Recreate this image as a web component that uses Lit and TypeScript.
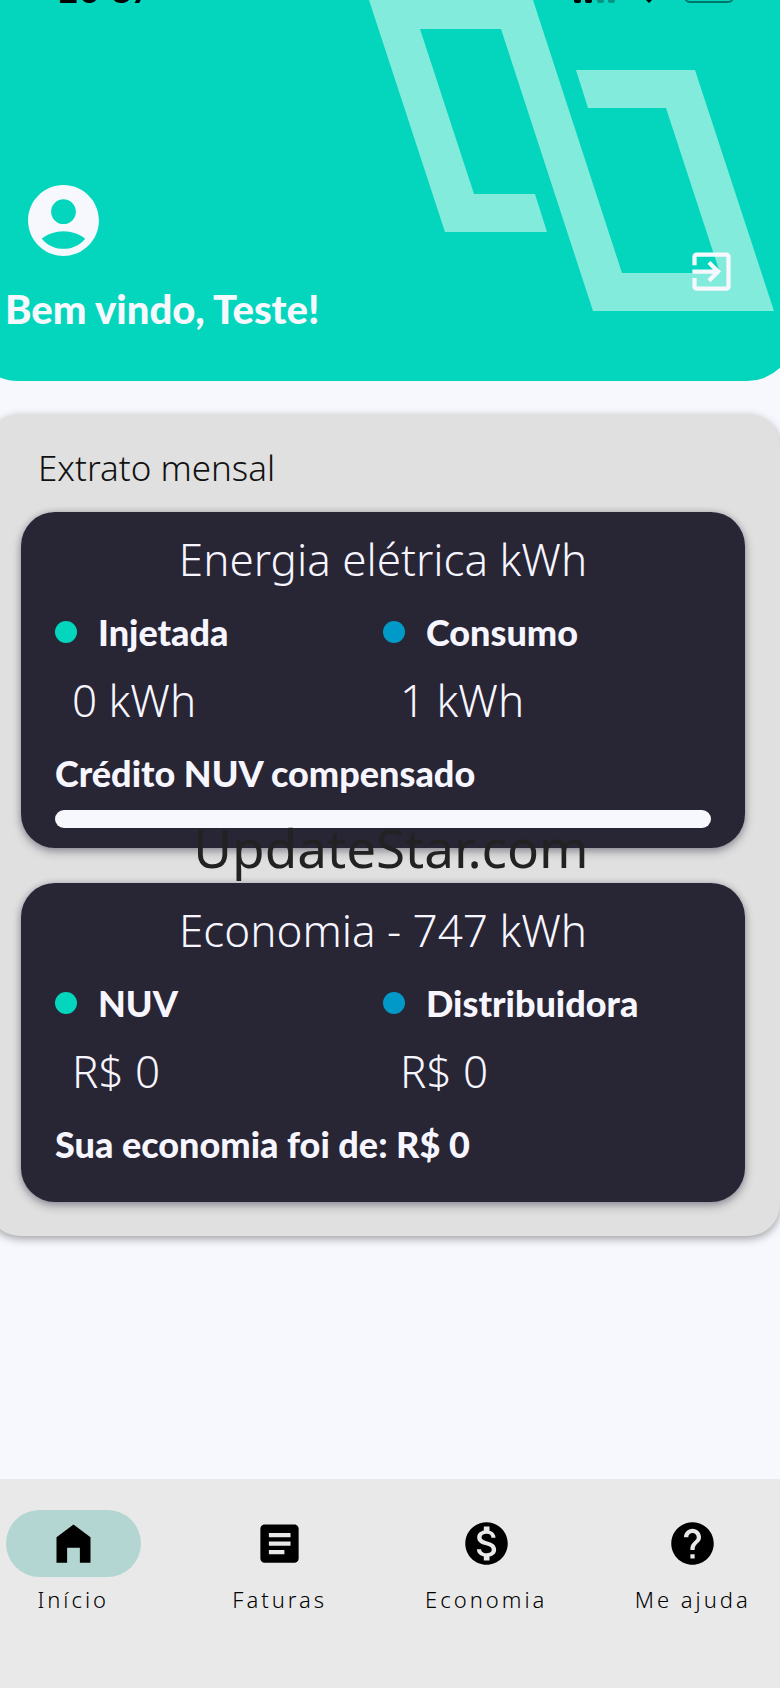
import { LitElement, html, css, svg } from "lit";
import { customElement, property } from "lit/decorators.js";

const ICONS = {
  account: svg`<path d="M12 2C6.48 2 2 6.48 2 12s4.48 10 10 10 10-4.48 10-10S17.52 2 12 2zm0 4c1.93 0 3.5 1.57 3.5 3.5S13.93 13 12 13s-3.5-1.57-3.5-3.5S10.07 6 12 6zm0 14c-2.03 0-4.43-.82-6.14-2.88C7.55 15.8 9.68 15 12 15s4.45.8 6.14 2.12C16.43 19.18 14.03 20 12 20z"/>`,
  exit: svg`<path d="M10.09 15.59L11.5 17l5-5-5-5-1.41 1.41L12.67 11H3v2h9.67l-2.58 2.59zM19 3H5c-1.11 0-2 .9-2 2v4h2V5h14v14H5v-4H3v4c0 1.1.89 2 2 2h14c1.1 0 2-.9 2-2V5c0-1.1-.9-2-2-2z"/>`,
  home: svg`<path d="M4 21V9l8-6 8 6v12h-5v-7H9v7z"/>`,
  article: svg`<path d="M19 3H5c-1.1 0-2 .9-2 2v14c0 1.1.9 2 2 2h14c1.1 0 2-.9 2-2V5c0-1.1-.9-2-2-2zm-4.7 14H7v-2h7.3v2zm2.9-4H7v-2h10.2v2zm0-4H7V7h10.2v2z"/>`,
  money: svg`<path d="M12 2C6.48 2 2 6.48 2 12s4.48 10 10 10 10-4.48 10-10S17.52 2 12 2zm1.41 16.09V20h-2.67v-1.93c-1.71-.36-3.16-1.46-3.27-3.4h1.96c.1 1.05.82 1.87 2.65 1.87 1.96 0 2.4-.98 2.4-1.59 0-.83-.44-1.61-2.67-2.14-2.48-.6-4.18-1.62-4.18-3.67 0-1.72 1.39-2.84 3.11-3.21V4h2.67v1.95c1.86.45 2.79 1.86 2.85 3.39H14.3c-.05-1.11-.64-1.87-2.22-1.87-1.5 0-2.4.68-2.4 1.64 0 .84.65 1.39 2.67 1.91s4.18 1.39 4.18 3.91c-.01 1.83-1.38 2.83-3.12 3.16z"/>`,
  help: svg`<path d="M12 2C6.48 2 2 6.48 2 12s4.48 10 10 10 10-4.48 10-10S17.52 2 12 2zm1 17h-2v-2h2v2zm2.07-7.75l-.9.92C13.45 12.9 13 13.5 13 15h-2v-.5c0-1.1.45-2.1 1.17-2.83l1.24-1.26c.37-.36.59-.86.59-1.41 0-1.1-.9-2-2-2s-2 .9-2 2H8c0-2.21 1.79-4 4-4s4 1.79 4 4c0 .88-.36 1.68-.93 2.25z"/>`,
};

type IconName = keyof typeof ICONS;

@customElement("nuv-icon")
class NuvIcon extends LitElement {
  static styles = css`
    :host { display: block; width: 51px; height: 51px; }
    .glyph { display: block; width: 100%; height: 100%; fill: currentColor; }
  `;
  @property() name: IconName = "home";
  render() {
    return html`<svg class="glyph" viewBox="0 0 24 24" aria-hidden="true">${ICONS[this.name]}</svg>`;
  }
}

@customElement("nuv-header")
class NuvHeader extends LitElement {
  static styles = css`
    :host {
      display: block;
      position: relative;
      overflow: hidden;
      margin: 0 -15px 0 -30px;
      border-radius: 0 0 48px 48px;
      background: #03d6bd;
      color: #f7f8fd;
    }
    .art { position: absolute; top: 0; right: 15px; width: 420px; height: 320px; fill: #82ebdc; }
    .status {
      position: relative;
      display: flex;
      justify-content: space-between;
      align-items: flex-end;
      height: 4px;
      padding: 0 60px 0 88px;
      color: #000;
      font: 600 33px/33px Inter, sans-serif;
    }
    .clock { height: 29px; }
    .signals { display: block; width: 165px; height: 4px; }
    .bar {
      position: relative;
      display: flex;
      justify-content: space-between;
      align-items: flex-end;
      padding: 174px 58px 48px 35px;
    }
    .avatar { width: 85px; height: 85px; margin: 0 0 22px 16px; }
    .greeting { margin: 0; font: 900 40px/48px Lato, sans-serif; }
    .logout {
      margin: 0 0 36px;
      padding: 0;
      border: 0;
      background: none;
      color: inherit;
      cursor: pointer;
    }
  `;
  render() {
    return html`
      <svg class="art" viewBox="360 0 420 320" aria-hidden="true">
        <path d="M369 0 445 232H547L535 194H474L420 29H501L593 311H774L695 70H576L588 108H666L720 273H622L533 0Z" />
      </svg>
      <div class="status">
        <span class="clock">20:37</span>
        <svg class="signals" viewBox="570 0 165 4" aria-hidden="true">
          <rect x="574" y="-6" width="7" height="9" rx="2" />
          <rect x="585" y="-8" width="7" height="11" rx="2" />
          <rect x="597" y="-8" width="7" height="11" rx="2" opacity=".3" />
          <rect x="608" y="-8" width="7" height="11" rx="2" opacity=".3" />
          <path d="M642 -4 649 3 656 -4Z" />
          <rect x="685" y="-18" width="48" height="20" rx="5" fill="none" stroke="#000" stroke-opacity=".45" stroke-width="2" />
        </svg>
      </div>
      <div class="bar">
        <div>
          <nuv-icon class="avatar" name="account"></nuv-icon>
          <h1 class="greeting">Bem vindo, Teste!</h1>
        </div>
        <button class="logout" aria-label="Sair"><nuv-icon name="exit"></nuv-icon></button>
      </div>
    `;
  }
}

interface Entry { label: string; value: string; }

@customElement("nuv-card")
class NuvCard extends LitElement {
  static styles = css`
    :host {
      display: block;
      padding: 18px 34px 20px;
      border-radius: 34px;
      background: #282535;
      color: #f7f6ff;
      box-shadow: 0 4px 10px rgba(30, 25, 50, 0.35), 0 0 6px rgba(30, 25, 50, 0.2);
    }
    .title { margin: 0; font-size: 44px; line-height: 58px; font-weight: 300; text-align: center; }
    .entries { display: grid; grid-template-columns: 1fr 1fr; margin: 22px 0 0; }
    .label { display: flex; align-items: center; gap: 21px; font: 900 36px/44px Lato, sans-serif; }
    .label::before { content: ""; width: 22px; height: 22px; border-radius: 50%; background: #04d6bd; }
    .entry:nth-child(2) .label::before { background: #0099c8; }
    .value { margin: 20px 0 0 17px; font-size: 44px; line-height: 52px; font-weight: 300; }
  `;
  @property() heading = "";
  @property({ attribute: false }) entries: Entry[] = [];
  render() {
    return html`
      <h3 class="title">${this.heading}</h3>
      <dl class="entries">
        ${this.entries.map(
          (e) => html`<div class="entry"><dt class="label">${e.label}</dt><dd class="value">${e.value}</dd></div>`
        )}
      </dl>
      <slot></slot>
    `;
  }
}

@customElement("nuv-nav")
class NuvNav extends LitElement {
  static styles = css`
    :host { display: block; margin: 0 -16px 0 -30px; background: #e9e9e9; }
    .items { display: grid; grid-template-columns: repeat(4, 1fr); padding: 31px 0 74px; }
    .item { display: flex; flex-direction: column; align-items: center; color: #000; text-decoration: none; }
    .pill { display: grid; place-items: center; width: 135px; height: 67px; border-radius: 34px; }
    .item[aria-current="page"] .pill { background: #b3d6d2; }
    .text { margin-top: 7px; font-size: 22px; line-height: 30px; letter-spacing: 3px; font-weight: 300; }
  `;
  render() {
    const items: { icon: IconName; text: string }[] = [
      { icon: "home", text: "Início" },
      { icon: "article", text: "Faturas" },
      { icon: "money", text: "Economia" },
      { icon: "help", text: "Me ajuda" },
    ];
    return html`<nav class="items">
      ${items.map(
        (it, i) => html`<a class="item" href="#" aria-current=${i === 0 ? "page" : "false"}>
          <span class="pill"><nuv-icon name=${it.icon}></nuv-icon></span>
          <span class="text">${it.text}</span>
        </a>`
      )}
    </nav>`;
  }
}

@customElement("app-root")
class AppRoot extends LitElement {
  static styles = css`
    :host {
      display: flex;
      flex-direction: column;
      min-height: 100vh;
      overflow: hidden;
      background: #f7f8fd;
      font-family: "Noto Sans", sans-serif;
    }
    .main { flex: 1; padding-top: 33px; }
    .statement {
      margin-left: -12px;
      padding: 32px 35px 34px 33px;
      border-radius: 32px;
      background: #e0e0e0;
      box-shadow: 0 3px 8px rgba(0, 0, 0, 0.35);
    }
    .heading { margin: 0 0 22px 17px; font-size: 35px; line-height: 44px; font-weight: 300; color: #111; }
    .cards { position: relative; display: grid; gap: 35px; }
    .note { margin: 25px 0 0; font: 900 36px/44px Lato, sans-serif; }
    .note-last { margin-bottom: 16px; }
    .progress {
      display: block;
      width: 100%;
      height: 18px;
      margin-top: 15px;
      border: 0;
      border-radius: 9px;
      overflow: hidden;
      appearance: none;
      background: #f7f8fd;
    }
    .progress::-webkit-progress-bar { background: #f7f8fd; }
    .progress::-webkit-progress-value { background: #04d6bd; }
    .watermark {
      position: absolute;
      top: 300px;
      left: 0;
      right: 0;
      margin: 0 0 0 16px;
      font: 400 53px/72px "Noto Sans", sans-serif;
      text-align: center;
      color: #222;
      pointer-events: none;
    }
  `;
  render() {
    return html`
      <nuv-header></nuv-header>
      <main class="main">
        <section class="statement">
          <h2 class="heading">Extrato mensal</h2>
          <div class="cards">
            <nuv-card
              heading="Energia elétrica kWh"
              .entries=${[{ label: "Injetada", value: "0 kWh" }, { label: "Consumo", value: "1 kWh" }]}
            >
              <p class="note" id="credit">Crédito NUV compensado</p>
              <progress class="progress" max="100" value="0" aria-labelledby="credit"></progress>
            </nuv-card>
            <nuv-card
              heading="Economia - 747 kWh"
              .entries=${[{ label: "NUV", value: "R$ 0" }, { label: "Distribuidora", value: "R$ 0" }]}
            >
              <p class="note note-last">Sua economia foi de: R$ 0</p>
            </nuv-card>
            <p class="watermark">UpdateStar.com</p>
          </div>
        </section>
      </main>
      <nuv-nav></nuv-nav>
    `;
  }
}
